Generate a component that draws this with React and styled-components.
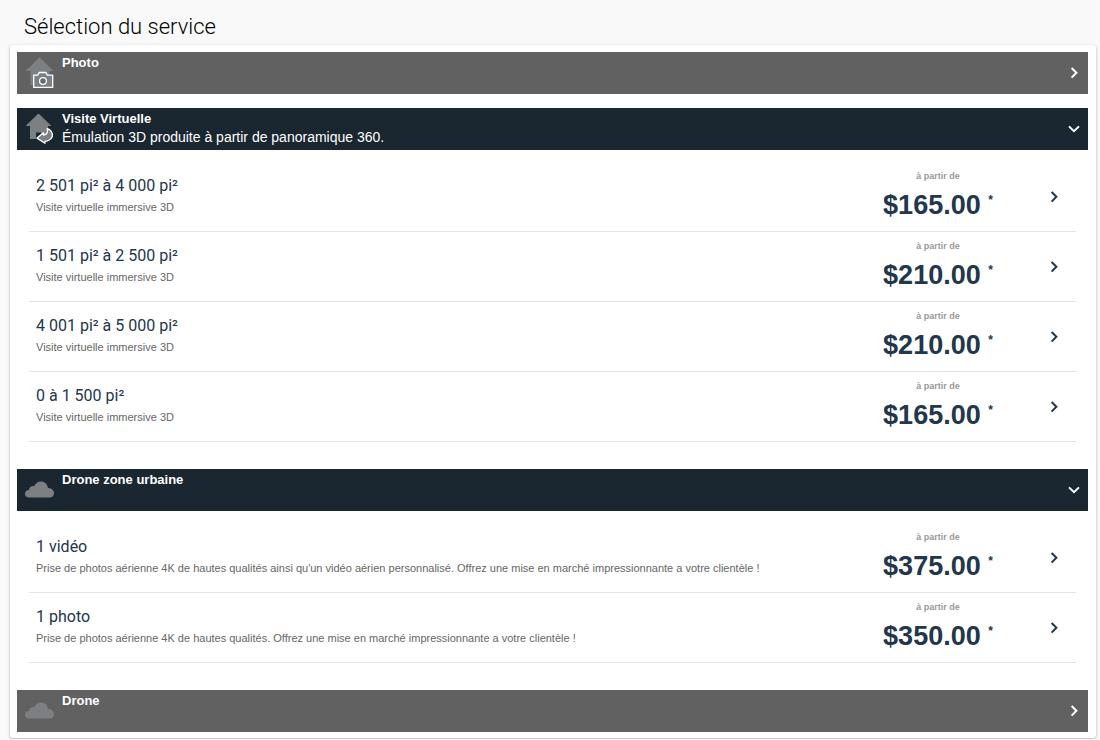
import React, { useState } from "react";
import styled, { createGlobalStyle } from "styled-components";

const categories = [
  { id: "photo", name: "Photo", icon: "camera", open: false, services: [] },
  {
    id: "visite",
    name: "Visite Virtuelle",
    description: "Émulation 3D produite à partir de panoramique 360.",
    icon: "tour",
    open: true,
    services: [
      { name: "2 501 pi² à 4 000 pi²", details: "Visite virtuelle immersive 3D", price: "$165.00" },
      { name: "1 501 pi² à 2 500 pi²", details: "Visite virtuelle immersive 3D", price: "$210.00" },
      { name: "4 001 pi² à 5 000 pi²", details: "Visite virtuelle immersive 3D", price: "$210.00" },
      { name: "0 à 1 500 pi²", details: "Visite virtuelle immersive 3D", price: "$165.00" },
    ],
  },
  {
    id: "drone-urbain",
    name: "Drone zone urbaine",
    icon: "cloud",
    open: true,
    services: [
      {
        name: "1 vidéo",
        details:
          "Prise de photos aérienne 4K de hautes qualités ainsi qu'un vidéo aérien personnalisé. Offrez une mise en marché impressionnante a votre clientèle !",
        price: "$375.00",
      },
      {
        name: "1 photo",
        details:
          "Prise de photos aérienne 4K de hautes qualités. Offrez une mise en marché impressionnante a votre clientèle !",
        price: "$350.00",
      },
    ],
  },
  { id: "drone", name: "Drone", icon: "cloud", open: false, services: [] },
];

function Chevron({ down }) {
  return (
    <svg width="24" height="24" viewBox="0 0 24 24" fill="none" stroke="currentColor" strokeWidth="2" aria-hidden="true">
      <path d={down ? "M7 9.4 12 14.2 17 9.4" : "M9.6 7 14.4 11.8 9.6 16.6"} />
    </svg>
  );
}

function CategoryIcon({ type }) {
  if (type === "cloud") {
    return (
      <svg width="32" height="36" viewBox="0 0 32 36" aria-hidden="true">
        <path
          d="M6 25.5a4 4 0 0 1-4-3.8c0-2.2 1.8-3.8 4-3.8.3-3 2.5-4.4 5.3-3.9C12.5 11.4 15 9.5 18 9.5c3.6 0 6.5 2.7 7 6.5 3.3.1 6 2 6 5s-2 4.5-4.7 4.5z"
          fill="#7c8083"
        />
      </svg>
    );
  }
  return (
    <svg width="32" height="36" viewBox="0 0 32 36" aria-hidden="true">
      <path d={type === "camera" ? "M16.5 2.5 30.5 16h-4v14H7.5V16h-5z" : "M15.5 2.5 28.5 15h-3.5v13H7V15H2.5z"} fill="#7c8083" />
      {type === "camera" ? (
        <g fill="#7c8083" stroke="#fff" strokeWidth="1.3" strokeLinejoin="round">
          <path d="M10.7 20.2h4l1.4-2.7h6.8l1.4 2.7h5.4v12.2h-19z" />
          <circle cx="20" cy="26" r="3.4" fill="#65696b" />
        </g>
      ) : (
        <g>
          <path d="M13 21.5h5v7h-5z" fill="#1a2630" />
          <path
            d="M20.5 21.8v2.3c3.2-.3 5-2.6 3.7-6.6 5.2 1.8 6.7 7.2 3.6 10.4-1.6 1.7-3.600 2.500-5.800 2.600v1.800L14 27.100z"
            fill="#7c8083"
            stroke="#fff"
            strokeWidth="1.3"
            strokeLinejoin="round"
          />
        </g>
      )}
    </svg>
  );
}

function Category({ category }) {
  const [open, setOpen] = useState(category.open);

  return (
    <section>
      <CategoryHeader type="button" $open={open} aria-expanded={open} onClick={() => setOpen(!open)}>
        <CategoryIcon type={category.icon} />
        <CategoryText>
          <strong>{category.name}</strong>
          {category.description && <span>{category.description}</span>}
        </CategoryText>
        <Chevron down={open} />
      </CategoryHeader>

      {open && category.services.length > 0 && (
        <ServiceList>
          {category.services.map((service) => (
            <li key={service.name}>
              <ServiceButton type="button">
                <ServiceInfo>
                  <ServiceName>{service.name}</ServiceName>
                  <ServiceDetails>{service.details}</ServiceDetails>
                </ServiceInfo>
                <PriceBlock>
                  <PriceLabel>à partir de</PriceLabel>
                  <Price>
                    {service.price} <sup>*</sup>
                  </Price>
                </PriceBlock>
                <Chevron />
              </ServiceButton>
            </li>
          ))}
        </ServiceList>
      )}
    </section>
  );
}

function App() {
  return (
    <>
      <GlobalStyle />
      <Page>
        <Title>Sélection du service</Title>
        <Card>
          {categories.map((category) => (
            <Category key={category.id} category={category} />
          ))}
        </Card>
      </Page>
    </>
  );
}

const GlobalStyle = createGlobalStyle`
  * {
    box-sizing: border-box;
  }
  body {
    margin: 0;
    background: #f9f9f9;
    font-family: "Liberation Sans", Arial, sans-serif;
  }
  button {
    font-family: inherit;
    border: 0;
    cursor: pointer;
    text-align: left;
  }
`;

const Page = styled.main`
  padding: 8px 4px 1px 10px;
`;

const Title = styled.h1`
  margin: 0;
  padding: 0 14px;
  font-family: Roboto, sans-serif;
  font-size: 22px;
  font-weight: 300;
  line-height: 37px;
  color: #000;
`;

const Card = styled.div`
  display: flex;
  flex-direction: column;
  gap: 14px;
  padding: 7px 8px 6px 7px;
  background: #fff;
  border-radius: 3px;
  box-shadow: 0 1px 3px rgba(0, 0, 0, 0.3);
`;

const CategoryHeader = styled.button`
  display: flex;
  align-items: flex-start;
  width: 100%;
  height: 42px;
  padding: 3px 2px 0 6px;
  color: #fff;
  background: ${(props) => (props.$open ? "#1a2630" : "#616161")};

  > svg:last-child {
    margin-top: 6px;
  }
`;

const CategoryText = styled.span`
  display: flex;
  flex: 1;
  flex-direction: column;
  gap: 1px;
  padding-left: 7px;
  font-size: 14px;
  line-height: 18px;

  strong {
    font-size: 13px;
    line-height: 16px;
  }
`;

const ServiceList = styled.ul`
  margin: 0;
  padding: 12px 12px 13px;
  list-style: none;
`;

const ServiceButton = styled.button`
  display: flex;
  align-items: center;
  width: 100%;
  height: 70px;
  padding: 0 10px 0 7px;
  color: #22364c;
  background: #fff;
  border-bottom: 1px solid #e3e3e3;
`;

const ServiceInfo = styled.span`
  display: flex;
  flex: 1;
  flex-direction: column;
  gap: 3px;
  padding-bottom: 2px;
`;

const ServiceName = styled.span`
  font-family: Roboto, sans-serif;
  font-size: 16px;
  line-height: 20px;
`;

const ServiceDetails = styled.span`
  font-size: 11px;
  line-height: 16px;
  color: #666;
`;

const PriceBlock = styled.span`
  display: flex;
  flex-direction: column;
  align-items: center;
  width: 208px;
  padding-top: 5px;
`;

const PriceLabel = styled.span`
  font-size: 9px;
  font-weight: bold;
  line-height: 12px;
  color: #999;
`;

const Price = styled.span`
  font-size: 27px;
  font-weight: bold;
  line-height: 46px;

  sup {
    font-size: 12px;
    line-height: 12px;
  }
`;

export default App;
